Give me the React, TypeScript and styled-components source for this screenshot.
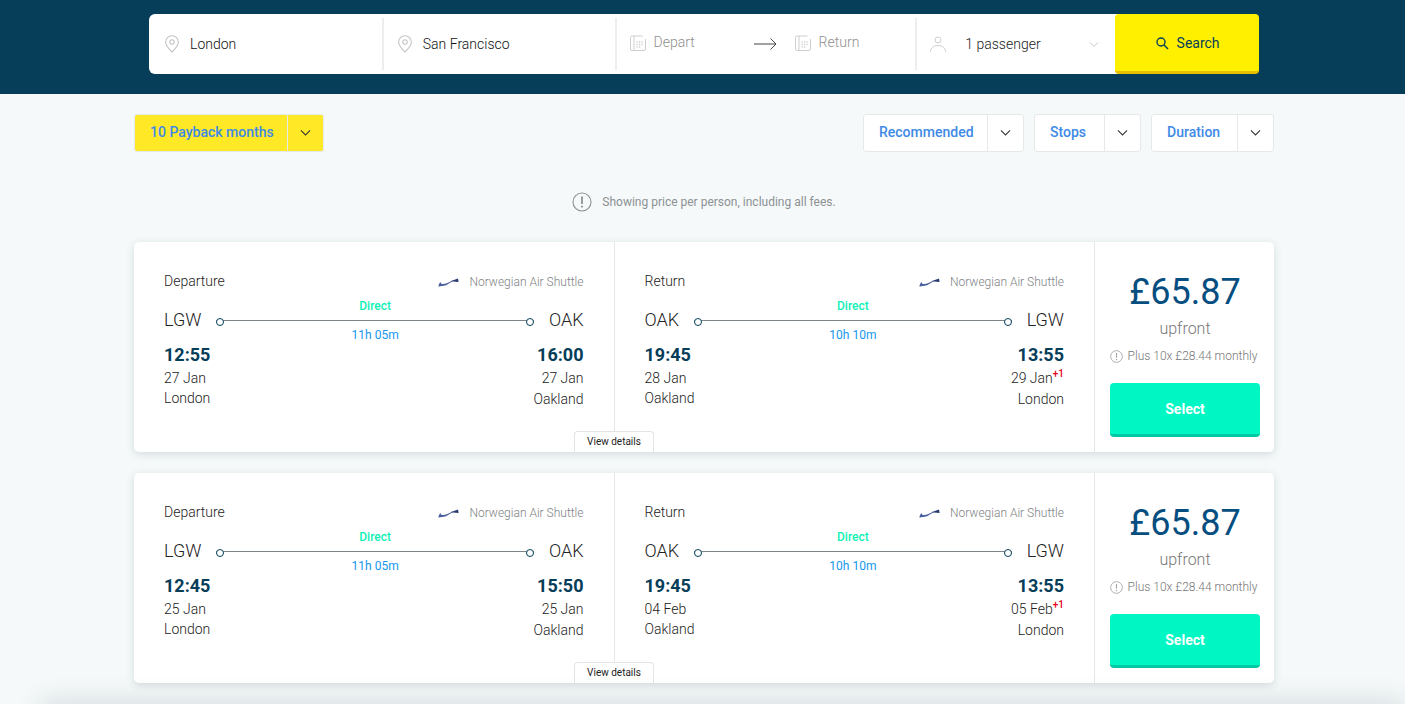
import React from "react";
import styled, { createGlobalStyle } from "styled-components";

const Global = createGlobalStyle`
  html, body { margin: 0; padding: 0; height: 100%; overflow: hidden; background: #f5f9fa; }
  body { font-family: Roboto, "Liberation Sans", sans-serif; color: #333; }
  * { box-sizing: border-box; }
`;

const Header = styled.header`
  height: 94px;
  background: #063d58;
  padding: 14px 146px 20px 149px;
`;
const SearchBar = styled.div`
  height: 60px;
  display: flex;
  background: #fff;
  border-radius: 6px;
`;
const Field = styled.div<{ $w: number; $light?: boolean }>`
  width: ${(p) => p.$w}px;
  height: 52px;
  margin-top: 4px;
  display: flex;
  align-items: center;
  border-right: 2px solid #eeeeee;
  font-size: 14px;
  font-weight: 300;
  color: ${(p) => (p.$light ? "#8f8f8f" : "#111")};
`;
const FieldIcon = styled.svg<{ $ml: number; $mr: number }>`
  width: 18px;
  height: 18px;
  margin-left: ${(p) => p.$ml}px;
  margin-right: ${(p) => p.$mr}px;
  flex: none;
`;
const DateText = styled.span<{ $w?: number }>`
  width: ${(p) => (p.$w ? `${p.$w}px` : "auto")};
  margin-top: -4px;
`;
const DateIcon = styled(FieldIcon)`
  margin-top: -2px;
`;
const Passenger = styled.div`
  width: 198px;
  display: flex;
  align-items: center;
  height: 52px;
  margin-top: 4px;
  font-size: 14px;
  color: #222;
  font-weight: 300;
`;
const PassengerLabel = styled.span`
  width: 124px;
`;
const SearchButton = styled.button`
  width: 144px;
  height: 60px;
  border: 0;
  border-bottom: 3px solid #e9bd00;
  border-radius: 4px;
  background: #fff000;
  display: flex;
  align-items: center;
  justify-content: center;
  gap: 8px;
  font: 400 14px Roboto, sans-serif;
  color: #063d58;
  padding: 0;
`;

const Main = styled.main`
  padding: 20px 131px 0 134px;
`;
const Toolbar = styled.div`
  display: flex;
  justify-content: space-between;
`;
const Sorts = styled.div`
  display: flex;
  gap: 10px;
`;
const Split = styled.div<{ $yellow?: boolean }>`
  height: 38px;
  display: flex;
  border: 1px solid #e6e9ea;
  border-radius: 3px;
  background: ${(p) => (p.$yellow ? "#ffe926" : "#fff")};
  color: #3e8ae6;
  font-size: 14px;
  font-weight: 500;
  align-items: center;
`;
const SplitLabel = styled.span<{ $w: number }>`
  width: ${(p) => p.$w}px;
  height: 100%;
  display: flex;
  align-items: center;
  padding: 0 0 2px 15px;
  white-space: nowrap;
`;
const SplitArrow = styled.span<{ $w: number }>`
  width: ${(p) => p.$w}px;
  height: 100%;
  display: flex;
  align-items: center;
  justify-content: center;
  border-left: 1px solid #e6e9ea;
`;
const Notice = styled.div`
  margin-top: 39px;
  height: 22px;
  display: flex;
  align-items: center;
  justify-content: center;
  gap: 10px;
  font-size: 12px;
  font-weight: 400;
  color: #8d9194;
`;
const Cards = styled.div`
  margin-top: 29px;
  display: flex;
  flex-direction: column;
  gap: 21px;
`;
const Card = styled.article`
  position: relative;
  height: 210px;
  display: flex;
  background: #fff;
  border-radius: 5px;
  box-shadow: 0 2px 8px rgba(40, 60, 70, 0.16);
`;
const Leg = styled.section`
  width: 480.5px;
  padding: 30px 30px 0;
  border-right: 1px solid #e4e6e7;
`;
const LegHead = styled.div`
  display: flex;
  justify-content: space-between;
  align-items: center;
  height: 18px;
`;
const LegTitle = styled.span`
  font-size: 14px;
  font-weight: 300;
  color: #222;
`;
const Airline = styled.span`
  display: flex;
  align-items: center;
  gap: 9px;
  font-size: 12px;
  font-weight: 300;
  color: #7e8285;
  margin-top: 2px;
`;
const Route = styled.div`
  margin-top: 7px;
  height: 44px;
  display: flex;
  justify-content: space-between;
  align-items: center;
`;
const Code = styled.span`
  font-size: 18px;
  font-weight: 300;
  color: #222;
`;
const Track = styled.div`
  flex: 1;
  display: flex;
  flex-direction: column;
  align-items: center;
  height: 43px;
  justify-content: space-between;
  font-size: 12px;
  line-height: 14px;
  margin: 2px 15px 0;
`;
const DirectLabel = styled.span`
  color: #10f0b6;
  font-weight: 500;
`;
const DurationLabel = styled.span`
  color: #1497ee;
  font-weight: 400;
`;
const Line = styled.div`
  width: 100%;
  height: 1px;
  background: #7d8589;
  position: relative;
  &::before, &::after {
    content: "";
    position: absolute;
    top: -2px;
    width: 6px;
    height: 6px;
    border: 1px solid #063d58;
    border-radius: 50%;
    background: #fff;
  }
  &::before { left: 0; }
  &::after { right: 0; }
`;
const Stops = styled.div`
  display: flex;
  justify-content: space-between;
  margin-top: 3px;
`;
const Stop = styled.div<{ $end?: boolean }>`
  display: flex;
  flex-direction: column;
  text-align: ${(p) => (p.$end ? "right" : "left")};
  font-size: 14px;
  font-weight: 300;
  color: #222;
  line-height: 20px;
`;
const Time = styled.span`
  font-size: 18px;
  font-weight: 700;
  color: #063d58;
  line-height: 22px;
  margin-bottom: 2px;
`;
const City = styled.span<{ $end?: boolean }>`
  margin-top: ${(p) => (p.$end ? 1 : 0)}px;
`;
const Sup = styled.sup`
  color: #e3001b;
  font-size: 10px;
  font-weight: 500;
  line-height: 0;
`;
const PriceCol = styled.aside`
  flex: 1;
  display: flex;
  flex-direction: column;
  align-items: center;
  padding: 27px 14px 0 15px;
`;
const Price = styled.div`
  font-size: 36px;
  line-height: 46px;
  color: #064e80;
  font-weight: 400;
`;
const Upfront = styled.div`
  margin-top: 4px;
  font-size: 16px;
  line-height: 20px;
  font-weight: 300;
  color: #777;
`;
const Monthly = styled.div`
  margin-top: 9px;
  margin-left: -3px;
  display: flex;
  align-items: center;
  gap: 5px;
  font-size: 12px;
  line-height: 16px;
  font-weight: 300;
  color: #777;
  white-space: nowrap;
`;
const SelectButton = styled.button`
  margin-top: 19px;
  width: 150px;
  height: 54px;
  border: 0;
  border-bottom: 3px solid #00c9a3;
  border-radius: 4px;
  background: #00f6c3;
  color: #fff;
  font: 700 14px Roboto, sans-serif;
  padding: 0;
`;
const Details = styled.button`
  position: absolute;
  left: 440px;
  bottom: 0;
  width: 80px;
  height: 21px;
  background: #fff;
  border: 1px solid #e2e4e5;
  border-bottom: 0;
  border-radius: 4px 4px 0 0;
  font: 400 10px Roboto, sans-serif;
  color: #222;
  padding: 0 0 2px;
`;
const BottomShade = styled.div`
  position: fixed;
  left: 40px;
  right: 0;
  bottom: -20px;
  height: 20px;
  box-shadow: 0 -4px 24px rgba(40, 60, 70, 0.15);
`;

const Pin = ({ ml }: { ml: number }) => (
  <FieldIcon $ml={ml} $mr={9} viewBox="0 0 18 18" fill="none" stroke="#c4c4c4" strokeWidth="1.1">
    <path d="M9 17C5.6 13.4 2.6 10.6 2.6 7.2a6.4 6.4 0 0 1 12.8 0c0 3.4-3 6.2-6.4 9.8z" />
    <circle cx="9" cy="7" r="2.2" />
  </FieldIcon>
);
const CalendarPaths = () => (
  <>
    <path d="M13.5 2H3a1.5 1.5 0 0 0-1.5 1.5V15A1.5 1.5 0 0 0 3 16.5h12a1.5 1.5 0 0 0 1.5-1.5V5" />
    <path d="M5 2v14.5" />
    <path d="M7.5 8h1.2M10 8h1.2M12.5 8h1.2M7.5 10.5h1.2M10 10.5h1.2M12.5 10.5h1.2M7.5 13h1.2M10 13h1.2" strokeWidth="1.3" />
  </>
);
const Chevron = ({ color = "#333", size = 11 }: { color?: string; size?: number }) => (
  <svg width={size} height={size * 0.67} viewBox="0 0 12 8" fill="none" stroke={color} strokeWidth="1.1">
    <path d="M1 1.5l5 5 5-5" />
  </svg>
);
const Info = ({ size, color }: { size: number; color: string }) => (
  <svg width={size} height={size} viewBox="0 0 20 20" fill="none" stroke={color} strokeWidth={size > 16 ? 1.1 : 1.4}>
    <circle cx="10" cy="10" r="9" />
    <path d="M10 4.5v7.5" strokeWidth="1.8" />
    <path d="M10 13.8v1.8" strokeWidth="1.8" />
  </svg>
);
const AirlineLogo = () => (
  <svg width="22" height="10" viewBox="0 0 22 10">
    <path d="M0.5 9.8C0.5 7.5 1.3 6 2.8 5C2.5 6.4 3.2 7 5 7C8 7 10.5 5.5 14 3.8L15 4.6C12 5.6 10.5 7.3 8 8.2C5 9.2 2.5 8.8 0.5 9.8Z" fill="#4a5f9e" />
    <path d="M13 4L20 1.6L20.6 5L15 4.6Z" fill="#2b3a70" />
  </svg>
);

type LegData = {
  title: string; from: string; to: string; dur: string; dep: string; arr: string;
  depDate: string; arrDate: string; fromCity: string; toCity: string; plus?: boolean;
};

const LegView = ({ d }: { d: LegData }) => (
  <Leg>
    <LegHead>
      <LegTitle>{d.title}</LegTitle>
      <Airline><AirlineLogo />Norwegian Air Shuttle</Airline>
    </LegHead>
    <Route>
      <Code>{d.from}</Code>
      <Track>
        <DirectLabel>Direct</DirectLabel>
        <Line />
        <DurationLabel>{d.dur}</DurationLabel>
      </Track>
      <Code>{d.to}</Code>
    </Route>
    <Stops>
      <Stop>
        <Time>{d.dep}</Time>
        <span>{d.depDate}</span>
        <span>{d.fromCity}</span>
      </Stop>
      <Stop $end>
        <Time>{d.arr}</Time>
        <span>{d.arrDate}{d.plus && <Sup>+1</Sup>}</span>
        <City $end>{d.toCity}</City>
      </Stop>
    </Stops>
  </Leg>
);

const flights: LegData[][] = [
  [
    { title: "Departure", from: "LGW", to: "OAK", dur: "11h 05m", dep: "12:55", arr: "16:00", depDate: "27 Jan", arrDate: "27 Jan", fromCity: "London", toCity: "Oakland" },
    { title: "Return", from: "OAK", to: "LGW", dur: "10h 10m", dep: "19:45", arr: "13:55", depDate: "28 Jan", arrDate: "29 Jan", fromCity: "Oakland", toCity: "London", plus: true },
  ],
  [
    { title: "Departure", from: "LGW", to: "OAK", dur: "11h 05m", dep: "12:45", arr: "15:50", depDate: "25 Jan", arrDate: "25 Jan", fromCity: "London", toCity: "Oakland" },
    { title: "Return", from: "OAK", to: "LGW", dur: "10h 10m", dep: "19:45", arr: "13:55", depDate: "04 Feb", arrDate: "05 Feb", fromCity: "Oakland", toCity: "London", plus: true },
  ],
];

export default function App() {
  return (
    <>
      <Global />
      <Header>
        <SearchBar>
          <Field $w={235}><Pin ml={14} />London</Field>
          <Field $w={233}><Pin ml={12} />San Francisco</Field>
          <Field $w={301} $light>
            <DateIcon $ml={12} $mr={7} viewBox="0 0 18 18" fill="none" stroke="#cfcfcf" strokeWidth="1"><CalendarPaths /></DateIcon>
            <DateText $w={100}>Depart</DateText>
            <svg width="23" height="14" viewBox="0 0 23 14" fill="none" stroke="#444" strokeWidth="1"><path d="M0 7h22M16.5 1.5L22 7l-5.5 5.5" /></svg>
            <DateIcon $ml={17} $mr={7} viewBox="0 0 18 18" fill="none" stroke="#cfcfcf" strokeWidth="1"><CalendarPaths /></DateIcon>
            <DateText>Return</DateText>
          </Field>
          <Passenger>
            <FieldIcon $ml={12} $mr={18} viewBox="0 0 18 18" fill="none" stroke="#cfcfcf" strokeWidth="1">
              <circle cx="9" cy="5" r="3" />
              <path d="M1.5 17c0-4 3-6.5 7.5-6.5s7.5 2.5 7.5 6.5" />
            </FieldIcon>
            <PassengerLabel>1 passenger</PassengerLabel>
            <Chevron color="#c4c4c4" size={10} />
          </Passenger>
          <SearchButton>
            <svg width="14" height="14" viewBox="0 0 14 14" fill="none" stroke="#063d58" strokeWidth="1.4">
              <circle cx="6" cy="6" r="4" />
              <path d="M9 9l4 4" />
            </svg>
            Search
          </SearchButton>
        </SearchBar>
      </Header>
      <Main>
        <Toolbar>
          <Split $yellow>
            <SplitLabel $w={152}>10 Payback months</SplitLabel>
            <SplitArrow $w={36}><Chevron /></SplitArrow>
          </Split>
          <Sorts>
            <Split><SplitLabel $w={123}>Recommended</SplitLabel><SplitArrow $w={36}><Chevron /></SplitArrow></Split>
            <Split><SplitLabel $w={69}>Stops</SplitLabel><SplitArrow $w={36}><Chevron /></SplitArrow></Split>
            <Split><SplitLabel $w={85}>Duration</SplitLabel><SplitArrow $w={36}><Chevron /></SplitArrow></Split>
          </Sorts>
        </Toolbar>
        <Notice><Info size={20} color="#8d9194" />Showing price per person, including all fees.</Notice>
        <Cards>
          {flights.map((legs, i) => (
            <Card key={i}>
              <LegView d={legs[0]} />
              <LegView d={legs[1]} />
              <PriceCol>
                <Price>£65.87</Price>
                <Upfront>upfront</Upfront>
                <Monthly><Info size={13} color="#a8a8a8" />Plus 10x £28.44 monthly</Monthly>
                <SelectButton>Select</SelectButton>
              </PriceCol>
              <Details>View details</Details>
            </Card>
          ))}
        </Cards>
      </Main>
      <BottomShade />
    </>
  );
}
